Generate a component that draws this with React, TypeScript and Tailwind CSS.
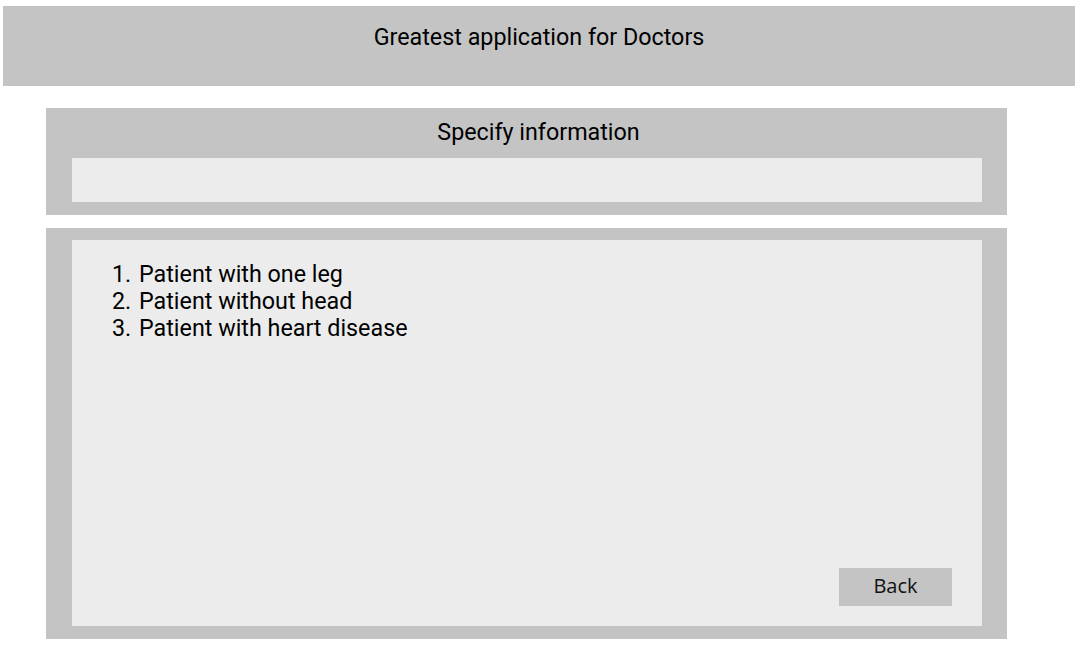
const patients = ['Patient with one leg', 'Patient without head', 'Patient with heart disease'];

export default function App() {
    return (
        <div className="w-[1078px] h-[660px] bg-white text-black font-['Roboto',sans-serif] pt-[6px]">
            <header className="mx-[3px] h-[80px] bg-[#c4c4c4] flex justify-center pt-[18px]">
                <h1 className="text-[23.3px] leading-[27px]">Greatest application for Doctors</h1>
            </header>

            <section className="mt-[22px] ml-[46px] w-[961px] h-[107px] bg-[#c4c4c4] px-[26px] pt-[11px] flex flex-col">
                <h2 className="text-[23.3px] leading-[27px] text-center pl-[24px]">Specify information</h2>
                <input className="mt-[12px] h-[44px] w-[910px] bg-[#ececec] outline-none px-3" />
            </section>

            <section className="mt-[13px] ml-[46px] w-[961px] h-[411px] bg-[#c4c4c4] px-[26px] pt-[12px] pb-[13px]">
                <div className="h-full w-[910px] bg-[#ececec] flex flex-col pt-[21px] pb-[20px] pr-[30px]">
                    <ol className="pl-[40px]">
                        {patients.map((p, i) => (
                            <li key={p} className="flex text-[23.3px] leading-[27px]">
                                <span className="w-[27px]">{i + 1}.</span>
                                <span>{p}</span>
                            </li>
                        ))}
                    </ol>
                    <button className="mt-auto self-end w-[113px] h-[38px] bg-[#c4c4c4] text-[20px] font-['Open_Sans',sans-serif] leading-none text-[#111] pb-[2px]">
                        Back
                    </button>
                </div>
            </section>
        </div>
    );
}
